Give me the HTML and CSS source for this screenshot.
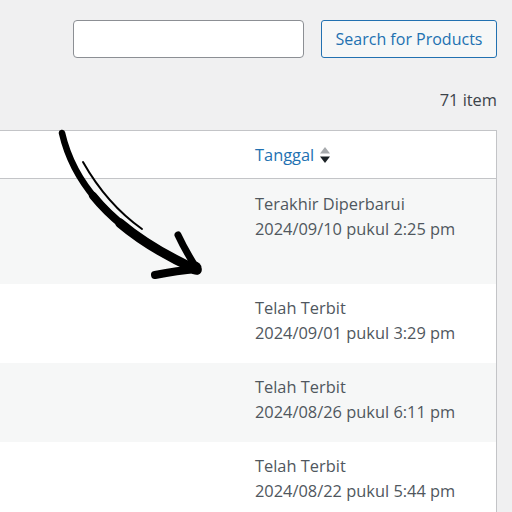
FILE: index.html
```html
<!DOCTYPE html>
<html>
<head>
<meta charset="utf-8">
<link rel="stylesheet" href="styles.css">
</head>
<body>
<div class="page">
  <div class="search-box">
    <input class="search-input" type="search">
    <button class="search-btn">Search for Products</button>
  </div>
  <div class="count">71 item</div>
  <div class="table">
    <div class="row head">
      <div class="cell"></div>
      <div class="cell date"><span class="sort-link">Tanggal</span><span class="sort-icon"><svg width="12" height="18" viewBox="0 0 12 18"><polygon points="6,1 11,7.5 1,7.5" fill="#a7aaad"/><polygon points="1,10.5 11,10.5 6,17" fill="#1d2327"/></svg></span></div>
    </div>
    <div class="row alt tall">
      <div class="cell"></div>
      <div class="cell date"><div>Terakhir Diperbarui</div><div>2024/09/10 pukul 2:25 pm</div></div>
    </div>
    <div class="row">
      <div class="cell"></div>
      <div class="cell date"><div>Telah Terbit</div><div>2024/09/01 pukul 3:29 pm</div></div>
    </div>
    <div class="row alt">
      <div class="cell"></div>
      <div class="cell date"><div>Telah Terbit</div><div>2024/08/26 pukul 6:11 pm</div></div>
    </div>
    <div class="row">
      <div class="cell"></div>
      <div class="cell date"><div>Telah Terbit</div><div>2024/08/22 pukul 5:44 pm</div></div>
    </div>
  </div>
  <svg class="arrow" width="512" height="512" viewBox="0 0 512 512">
    <path d="M62 133 C 75 190, 120 235, 197 270" fill="none" stroke="#000" stroke-width="6.5" stroke-linecap="round"/>
    <path d="M92.96 195.77 C 116.12 224.4, 150.8 249, 197 270" fill="none" stroke="#000" stroke-width="8" stroke-linecap="round"/>
    <path d="M119.96 223.07 C 140.52 240.4, 166.2 256, 197 270" fill="none" stroke="#000" stroke-width="9.5" stroke-linecap="round"/>
    <path d="M83 162 C 100 192, 118 212, 142 229" fill="none" stroke="#000" stroke-width="2" stroke-linecap="round"/>
    <path d="M178 235 C 184 248, 190 258, 197 269" fill="none" stroke="#000" stroke-width="7" stroke-linecap="round"/>
    <path d="M155 275 C 170 272, 184 270, 197 269" fill="none" stroke="#000" stroke-width="8" stroke-linecap="round"/>
    <circle cx="195" cy="268" r="6.5" fill="#000"/>
  </svg>
</div>
</body>
</html>
```
FILE: styles.css
```css
html, body {
  margin: 0;
  padding: 0;
  background: #f0f0f1;
}
body {
  font-family: "Open Sans", "Noto Sans", sans-serif;
  color: #50575e;
  font-size: 16.4px;
}
.page {
  position: relative;
  width: 512px;
  height: 512px;
  overflow: hidden;
  padding-right: 15px;
  box-sizing: border-box;
}
.search-box {
  display: flex;
  justify-content: flex-end;
  gap: 17px;
  padding-top: 20px;
}
.search-input {
  width: 231px;
  height: 38px;
  box-sizing: border-box;
  border: 1px solid #8c8f94;
  border-radius: 4px;
  background: #fff;
  margin: 0;
}
.search-btn {
  width: 176px;
  height: 38px;
  box-sizing: border-box;
  border: 1px solid #2271b1;
  border-radius: 3px;
  background: #f6f7f7;
  color: #2271b1;
  font-family: "Open Sans", "Noto Sans", sans-serif;
  font-size: 16px;
  margin: 0;
  padding: 0;
}
.count {
  text-align: right;
  margin-top: 30px;
  margin-bottom: 18px;
  line-height: 24px;
  font-size: 16.4px;
  color: #3c434a;
}
.table {
  border-top: 1px solid #c3c4c7;
  border-right: 1px solid #c3c4c7;
  background: #fff;
}
.row {
  display: grid;
  grid-template-columns: 245px 1fr;
  height: 79px;
  background: #fff;
}
.row.alt {
  background: #f6f7f7;
}
.row.tall {
  height: 105px;
}
.row.head {
  height: 47px;
  border-bottom: 1px solid #c3c4c7;
  background: #fff;
}
.cell.date {
  padding: 11px 10px 0 10px;
  line-height: 25px;
}
.tall .cell.date {
  padding-top: 12px;
}
.head .cell.date {
  padding-top: 0;
  display: flex;
  align-items: center;
  gap: 5px;
}
.sort-link {
  color: #2271b1;
}
.sort-icon {
  display: flex;
  align-items: center;
}
.arrow {
  position: absolute;
  left: 0;
  top: 0;
  pointer-events: none;
}
```
